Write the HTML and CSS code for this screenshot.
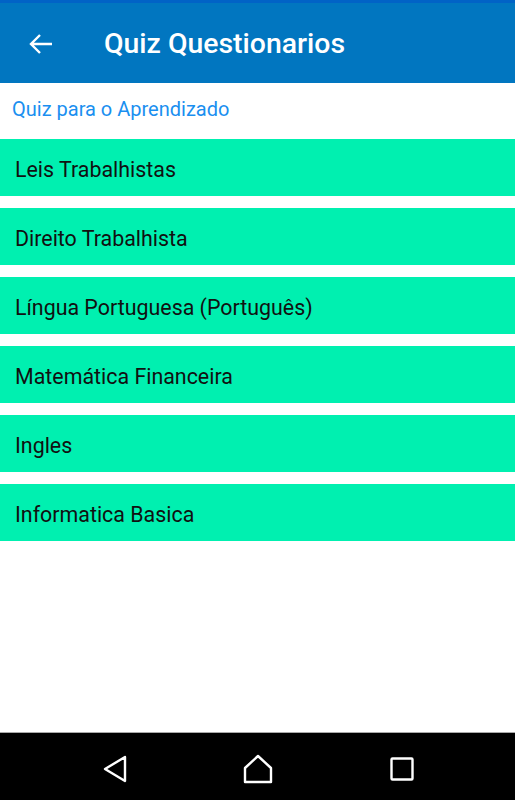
FILE: index.html
```html
<!DOCTYPE html>
<html>
<head>
<meta charset="utf-8">
<link rel="stylesheet" href="styles.css">
</head>
<body>
<div class="screen">
  <div class="status"></div>
  <header class="appbar">
    <svg class="back" width="24" height="20" viewBox="0 0 24 20"><path d="M23 10H2M11 1L2 10L11 19" fill="none" stroke="#fff" stroke-width="2.4"/></svg>
    <h1 class="title">Quiz Questionarios</h1>
  </header>
  <main class="content">
    <p class="subtitle">Quiz para o Aprendizado</p>
    <ul class="list">
      <li class="item">Leis Trabalhistas</li>
      <li class="item">Direito Trabalhista</li>
      <li class="item">Língua Portuguesa (Português)</li>
      <li class="item">Matemática Financeira</li>
      <li class="item">Ingles</li>
      <li class="item">Informatica Basica</li>
    </ul>
  </main>
  <nav class="navbar">
    <svg width="26" height="28" viewBox="0 0 26 28"><path d="M23 2L3 14L23 26Z" fill="none" stroke="#fff" stroke-width="2.4" stroke-linejoin="round"/></svg>
    <svg width="30" height="30" viewBox="0 0 30 30"><path d="M15 2L28 14V28H2V14Z" fill="none" stroke="#fff" stroke-width="2.4" stroke-linejoin="round"/></svg>
    <svg width="24" height="24" viewBox="0 0 24 24"><rect x="1.5" y="1.5" width="21" height="21" rx="1" fill="none" stroke="#fff" stroke-width="2.4"/></svg>
  </nav>
</div>
</body>
</html>
```
FILE: styles.css
```css
html, body { margin: 0; padding: 0; }
body { font-family: Roboto, "Noto Sans", sans-serif; background: #fff; }
.screen { width: 515px; height: 800px; display: flex; flex-direction: column; }
.status { height: 3px; background: #0163c6; }
.appbar { height: 80px; background: #0176c0; display: flex; align-items: center; }
.back { margin-left: 29px; margin-top: 1px; }
.title { margin: 2px 0 0 51px; color: #fff; font-size: 28.4px; font-weight: 500; line-height: 1; }
.content { flex: 1; display: flex; flex-direction: column; }
.subtitle { margin: 0; height: 56px; padding: 0 0 4px 12px; box-sizing: border-box; display: flex; align-items: center; color: #1a8ff0; font-size: 20px; }
.list { list-style: none; margin: 0; padding: 0; display: flex; flex-direction: column; gap: 12px; }
.item { height: 57px; box-sizing: border-box; padding: 3px 0 0 15px; background: #00f0b0; display: flex; align-items: center; font-size: 21.4px; color: #111; }
.navbar { height: 68px; box-sizing: border-box; padding-top: 4px; background: #000; border-top: 1px solid #a9a9a9; display: flex; align-items: center; justify-content: center; gap: 0; }
.navbar svg:nth-child(1) { margin-right: 115px; }
.navbar svg:nth-child(2) { margin-right: 117px; }
```
